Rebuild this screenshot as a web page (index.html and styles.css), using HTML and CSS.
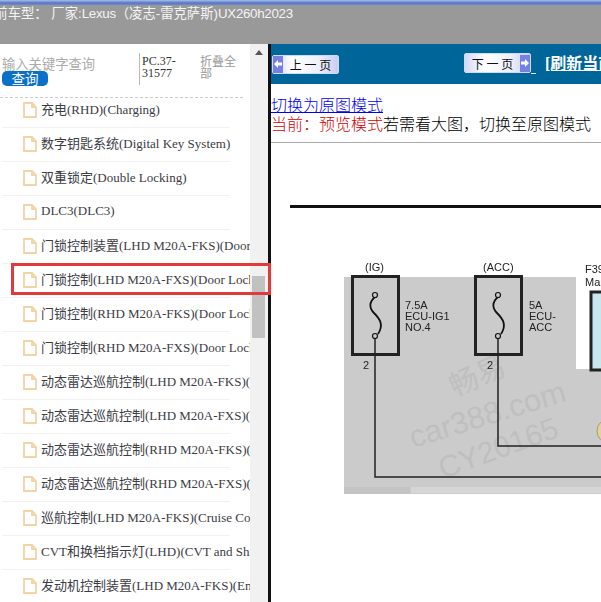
FILE: index.html
```html
<!DOCTYPE html>
<html lang="zh">
<head>
<meta charset="utf-8">
<title>门锁控制</title>
<link rel="stylesheet" href="styles.css">
</head>
<body>
<header class="top">
  <div class="strip"></div>
  <div class="title"><span class="title-text">当前车型&#xFF1A; 厂家:<span class="latin">Lexus</span>&#xFF08;凌志-雷克萨斯)<span class="latin">UX260h2023</span></span></div>
</header>
<main class="main">
  <aside class="side">
    <div class="search">
      <div class="query">
        <div class="hint">输入关键字查询</div>
        <button class="go">查询</button>
      </div>
      <div class="code">PC.37-<br>31577</div>
      <div class="fold">折叠全部</div>
    </div>
    <ul class="list">
      <li class="row"><svg class="doc" viewBox="0 0 14 16"><path d="M1 1h8l4 4v10H1z M9 1v4h4"/></svg><span>充电(RHD)(Charging)</span></li>
      <li class="row"><svg class="doc" viewBox="0 0 14 16"><path d="M1 1h8l4 4v10H1z M9 1v4h4"/></svg><span>数字钥匙系统(Digital Key System)</span></li>
      <li class="row"><svg class="doc" viewBox="0 0 14 16"><path d="M1 1h8l4 4v10H1z M9 1v4h4"/></svg><span>双重锁定(Double Locking)</span></li>
      <li class="row"><svg class="doc" viewBox="0 0 14 16"><path d="M1 1h8l4 4v10H1z M9 1v4h4"/></svg><span>DLC3(DLC3)</span></li>
      <li class="row"><svg class="doc" viewBox="0 0 14 16"><path d="M1 1h8l4 4v10H1z M9 1v4h4"/></svg><span>门锁控制装置(LHD M20A-FKS)(Door Lock Control)</span></li>
      <li class="row"><svg class="doc" viewBox="0 0 14 16"><path d="M1 1h8l4 4v10H1z M9 1v4h4"/></svg><span>门锁控制(LHD M20A-FXS)(Door Lock Control)</span></li>
      <li class="row"><svg class="doc" viewBox="0 0 14 16"><path d="M1 1h8l4 4v10H1z M9 1v4h4"/></svg><span>门锁控制(RHD M20A-FKS)(Door Lock Control)</span></li>
      <li class="row"><svg class="doc" viewBox="0 0 14 16"><path d="M1 1h8l4 4v10H1z M9 1v4h4"/></svg><span>门锁控制(RHD M20A-FXS)(Door Lock Control)</span></li>
      <li class="row"><svg class="doc" viewBox="0 0 14 16"><path d="M1 1h8l4 4v10H1z M9 1v4h4"/></svg><span>动态雷达巡航控制(LHD M20A-FKS)(Dynamic Radar)</span></li>
      <li class="row"><svg class="doc" viewBox="0 0 14 16"><path d="M1 1h8l4 4v10H1z M9 1v4h4"/></svg><span>动态雷达巡航控制(LHD M20A-FXS)(Dynamic Radar)</span></li>
      <li class="row"><svg class="doc" viewBox="0 0 14 16"><path d="M1 1h8l4 4v10H1z M9 1v4h4"/></svg><span>动态雷达巡航控制(RHD M20A-FKS)(Dynamic Radar)</span></li>
      <li class="row"><svg class="doc" viewBox="0 0 14 16"><path d="M1 1h8l4 4v10H1z M9 1v4h4"/></svg><span>动态雷达巡航控制(RHD M20A-FXS)(Dynamic Radar)</span></li>
      <li class="row"><svg class="doc" viewBox="0 0 14 16"><path d="M1 1h8l4 4v10H1z M9 1v4h4"/></svg><span>巡航控制(LHD M20A-FKS)(Cruise Control)</span></li>
      <li class="row"><svg class="doc" viewBox="0 0 14 16"><path d="M1 1h8l4 4v10H1z M9 1v4h4"/></svg><span>CVT和换档指示灯(LHD)(CVT and Shift Indicator)</span></li>
      <li class="row"><svg class="doc" viewBox="0 0 14 16"><path d="M1 1h8l4 4v10H1z M9 1v4h4"/></svg><span>发动机控制装置(LHD M20A-FKS)(Engine Control)</span></li>
    </ul>
  </aside>
  <div class="scroll">
    <div class="arrow"></div>
    <div class="thumb"></div>
  </div>
  <section class="content">
    <nav class="bar">
      <a class="btn prev"><span class="cap"><svg viewBox="0 0 10 10"><path d="M1 5l4-4v2.500h4v3H5V9z"/></svg></span><span class="lbl">上 一 页</span></a>
      <a class="btn next"><span class="lbl">下 一 页</span><span class="cap"><svg viewBox="0 0 10 10"><path d="M9 5L5 1v2.500H1v3h4V9z"/></svg></span></a>
      <span class="tail"></span>
      <a class="refresh">[刷新当前页]</a>
    </nav>
    <div class="mode">
      <a class="switch">切换为原图模式</a>
      <div class="state"><span class="now">当前&#xFF1A;预览模式</span>若需看大图&#xFF0C;切换至原图模式</div>
    </div>
    <svg class="figure" viewBox="271 144 330 458">
      <rect x="290" y="206" width="311" height="3" fill="#111"/>
      <rect x="344" y="278" width="257" height="217" fill="#cbcbcb"/>
      <rect x="344" y="488" width="66" height="7" fill="#c4c4c4"/>
      <rect x="411" y="488" width="190" height="6" fill="#d6d6d6"/>
      <rect x="576" y="270" width="25" height="100" fill="#fff"/>
      <g class="wm">
        <text class="wm-a" transform="translate(455 398) rotate(-24)">畅易</text>
        <text class="wm-b" transform="translate(413 449) rotate(-17)">car388.com</text>
        <text class="wm-c" transform="translate(443 480) rotate(-20)">CY20165</text>
      </g>
      <g class="box">
        <rect x="352.500" y="277.500" width="46" height="78"/>
        <rect x="475.500" y="277.500" width="46" height="78"/>
        <rect class="ecu" x="591" y="293" width="20" height="78"/>
      </g>
      <circle cx="609" cy="432" r="12" fill="#e6d48c" stroke="#999"/>
      <g class="wire">
        <path d="M375 340V478H601"/>
        <path d="M498 340V447H601"/>
      </g>
      <g class="fuse">
        <path d="M375 298C369 303 369 309 374 314C380 320 384 326 378 335"/>
        <circle cx="375" cy="296" r="2.500"/>
        <circle cx="375" cy="337" r="2.500"/>
        <path d="M498 298C492 303 492 309 497 314C503 320 507 326 501 335"/>
        <circle cx="498" cy="296" r="2.500"/>
        <circle cx="498" cy="337" r="2.500"/>
      </g>
      <g class="lab">
        <text x="365" y="272">(IG)</text>
        <text x="483" y="272">(ACC)</text>
        <text x="585" y="274">F39</text>
        <text x="585" y="287">Main</text>
        <text x="405" y="310">7.5A</text>
        <text x="405" y="321">ECU-IG1</text>
        <text x="405" y="332">NO.4</text>
        <text x="529" y="310">5A</text>
        <text x="529" y="321">ECU-</text>
        <text x="529" y="332">ACC</text>
        <text x="363" y="370">2</text>
        <text x="487" y="370">2</text>
      </g>
    </svg>
  </section>
  <div class="mark"></div>
</main>
</body>
</html>
```

FILE: styles.css
```css
* { box-sizing: border-box; }
html, body { margin: 0; height: 100%; overflow: hidden; background: #fff; }
body { width: 601px; height: 602px; font-family: "Liberation Serif", "Noto Sans CJK SC", serif; }

.top { height: 44px; background: #999; }
.strip { height: 5px; background: linear-gradient(#a9bde9, #5577c4 60%, #6d8bd0); }
.title { height: 39px; overflow: hidden; color: #f4f4f4; white-space: nowrap; font: 13.33px/17px "Liberation Sans", "Noto Sans CJK SC", sans-serif; }
.title-text { display: block; margin-left: -19px; }
.latin { letter-spacing: -.3px; }

.main { position: relative; display: flex; height: 558px; }
.side { width: 250px; overflow: hidden; background: #fff; }
.search { display: flex; height: 54px; margin-right: 7px; padding-top: 9px; border-bottom: 1px dashed #ccc; }
.query { width: 139px; padding-left: 2px; }
.hint { height: 17px; font: 13.3px/21px "Noto Sans CJK SC", sans-serif; color: #aaa; }
.go { display: block; width: 46px; height: 15px; margin-top: 1px; padding: 0; border: 0; border-radius: 5px; background: #0a70c8; color: #fff; font: 13.5px/15px "Noto Sans CJK SC", sans-serif; }
.code { width: 59px; height: 32px; padding: 2px 0 0 2px; border-left: 1px solid #b9b9b9; font-size: 12px; line-height: 12px; color: #333; }
.fold { width: 37px; margin-left: 2px; padding-top: 2px; font: 12px/12px "Noto Sans CJK SC", sans-serif; color: #999; }

.list { margin: -4px 0 0; padding: 0; list-style: none; }
.row { display: flex; align-items: center; gap: 4px; width: 228px; height: 34px; margin-left: 2px; padding: 0 0 1px 21px; border-bottom: 1px solid #f2f2f2; white-space: nowrap; font-size: 13px; color: #3c3c44; }
.row span { margin-bottom: 3px; }
.doc { flex: none; width: 14px; height: 16px; fill: #fff; stroke: #f3d3a8; stroke-width: 1.8; }

.scroll { width: 18px; background: #f1f1f1; }
.arrow { width: 0; margin: 6px auto 0; border: 4px solid transparent; border-top: 0; border-bottom: 5px solid #555; }
.thumb { width: 13px; height: 62px; margin: 221px 0 0 2px; background: #c1c1c1; }

.content { flex: 1; min-width: 0; overflow: hidden; border-left: 3px solid #111; }
.bar { display: flex; align-items: center; height: 40px; padding-left: 1px; background: #006699; white-space: nowrap; overflow: hidden; }
.btn { flex: none; display: flex; align-items: center; width: 67px; height: 19px; border: 1px solid #cfdcf5; border-radius: 2px; background: linear-gradient(90deg, #d5d7f7, #fff 30%, #eef0fb 70%, #c9cdf3); font: 12px/17px "Noto Sans CJK SC", sans-serif; color: #111; }
.btn.next { height: 20px; margin: 0 0 2px 125px; }
.lbl { flex: 1; text-align: center; }
.cap { flex: none; display: block; width: 10px; height: 17px; padding-top: 3px; background: #7680e4; }
.cap svg { display: block; width: 10px; height: 10px; fill: #fff; }
.tail { flex: none; width: 5px; height: 1px; margin-top: 18px; background: #fff; }
.refresh { flex: none; margin-left: 9px; font: bold 16px/20px "Liberation Serif", "Noto Sans CJK SC", serif; color: #fff; text-decoration: underline; }

.mode { height: 59px; padding-top: 11px; border-bottom: 1px solid #aaa; font: 300 16px/19px "Noto Sans CJK SC", sans-serif; white-space: nowrap; color: #000; }
.switch { display: inline-block; color: #0000ee; text-decoration: underline; }
.now { color: #d40000; }

.figure { display: block; width: 330px; height: 458px; filter: blur(.35px); }
.box rect { fill: none; stroke: #222; stroke-width: 3; }
.box .ecu { fill: #c8e6ee; }
.wire path { fill: none; stroke: #222; stroke-width: 1.5; }
.fuse path { fill: none; stroke: #111; stroke-width: 1.8; }
.fuse circle { fill: #cbcbcb; stroke: #111; stroke-width: 1.2; }
.lab text { font: 11px "Liberation Sans", sans-serif; fill: #222; }
.wm text { fill: #bfbfbf; }
.wm-a { font: 29px "Noto Sans CJK SC", sans-serif; }
.wm-b { font: 31px "Liberation Sans", sans-serif; }
.wm-c { font: 30px "Liberation Sans", sans-serif; }

.mark { position: absolute; left: 11px; top: 219px; width: 260px; height: 32px; border: 3px solid #e3383c; }
```
